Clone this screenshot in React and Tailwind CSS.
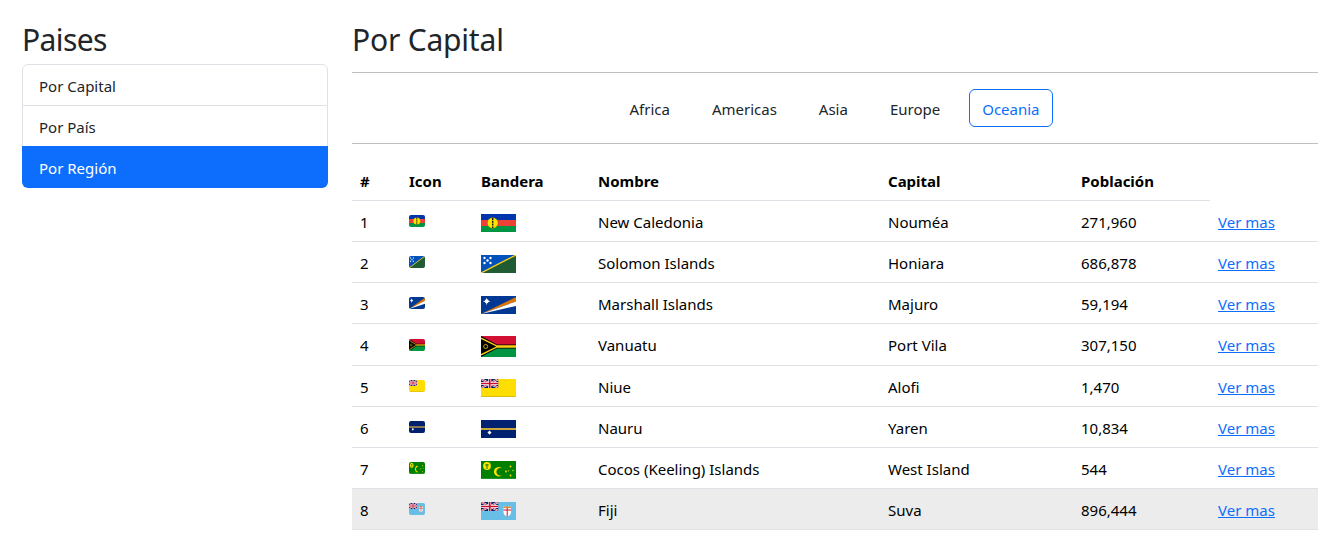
import { useState } from "react";

const UnionJack = ({ w, h }) => (
  <g>
    <rect width={w} height={h} fill="#012169" />
    <path d={`M0 0L${w} ${h}M${w} 0L0 ${h}`} stroke="#fff" strokeWidth="2" />
    <path d={`M0 0L${w} ${h}M${w} 0L0 ${h}`} stroke="#c8102e" strokeWidth="0.8" />
    <path d={`M${w / 2} 0V${h}M0 ${h / 2}H${w}`} stroke="#fff" strokeWidth="3" />
    <path d={`M${w / 2} 0V${h}M0 ${h / 2}H${w}`} stroke="#c8102e" strokeWidth="1.6" />
  </g>
);

const FLAGS = {
  nc: {
    h: 18,
    slice: true,
    art: (
      <g>
        <rect width="35" height="6" fill="#0035ad" />
        <rect y="6" width="35" height="6" fill="#ed4135" />
        <rect y="12" width="35" height="6" fill="#009543" />
        <circle cx="11.7" cy="9" r="5.4" fill="#fae600" stroke="#1a1a00" strokeWidth="0.2" />
        <path d="M11.7 4V14" stroke="#111" strokeWidth="1.4" strokeDasharray="2 0.8" />
      </g>
    ),
  },
  sb: {
    h: 18,
    art: (
      <g>
        <path d="M0 0H35L0 18Z" fill="#0051ba" />
        <path d="M35 0V18H0Z" fill="#215b33" />
        <path d="M0 18L35 0" stroke="#fcd116" strokeWidth="1.3" />
        <g fill="#fff">
          <circle cx="3.5" cy="3" r="1.2" />
          <circle cx="9.5" cy="3" r="1.2" />
          <circle cx="6.5" cy="5.5" r="1.2" />
          <circle cx="3.5" cy="8" r="1.2" />
          <circle cx="9.5" cy="8" r="1.2" />
        </g>
      </g>
    ),
  },
  mh: {
    h: 18,
    art: (
      <g>
        <rect width="35" height="18" fill="#003893" />
        <path d="M0 18L35 1V5.5Z" fill="#dd7500" />
        <path d="M0 18L35 5.5V10Z" fill="#fff" />
        <path d="M5.7 1.5L6.5 4.4L9.5 5.3L6.5 6.2L5.7 9.2L4.9 6.2L1.9 5.3L4.9 4.4Z" fill="#fff" />
        <circle cx="5.7" cy="5.3" r="2" fill="#fff" />
      </g>
    ),
  },
  vu: {
    h: 21,
    art: (
      <g>
        <rect width="35" height="10.5" fill="#d21034" />
        <rect y="10.5" width="35" height="10.5" fill="#009543" />
        <path d="M0 0L16 8.5H35V12.5H16L0 21Z" fill="#000" />
        <path d="M0 2.2L15.5 9.8H35V11.2H15.5L0 18.8" fill="none" stroke="#fdce12" strokeWidth="1.3" />
        <circle cx="4.7" cy="10.5" r="2" fill="none" stroke="#fdce12" strokeWidth="0.8" />
      </g>
    ),
  },
  nu: {
    h: 18,
    art: (
      <g>
        <rect width="35" height="18" fill="#fedd00" />
        <svg width="17.5" height="9" viewBox="0 0 17.5 9">
          <UnionJack w={17.5} h={9} />
        </svg>
        <rect y="17.3" width="35" height="0.7" fill="#c9b020" />
      </g>
    ),
  },
  nr: {
    h: 18,
    art: (
      <g>
        <rect width="35" height="18" fill="#002170" />
        <rect y="8" width="35" height="2" fill="#c9a53c" />
        <path d="M8.5 10.2L9.2 12L11 12.5L9.2 13L8.5 15L7.8 13L6 12.5L7.8 12Z" fill="#fff" />
        <circle cx="8.5" cy="12.5" r="1.5" fill="#fff" />
      </g>
    ),
  },
  cc: {
    h: 18,
    art: (
      <g>
        <rect width="35" height="18" fill="#008000" />
        <rect y="17.2" width="35" height="0.8" fill="#2e9a2e" />
        <circle cx="6" cy="5" r="3.9" fill="#ffe000" />
        <path d="M6 3V8M4.3 4H7.7" stroke="#0a7a00" strokeWidth="1" />
        <path d="M21 7.2A4.8 4.8 0 1 0 21 14.2A3.9 3.9 0 1 1 21 7.2Z" fill="#ffe000" />
        <g fill="#ffe000">
          <circle cx="25" cy="10.5" r="0.9" />
          <circle cx="29.5" cy="5.5" r="0.9" />
          <circle cx="29.5" cy="14.5" r="0.9" />
          <circle cx="32" cy="9.5" r="0.7" />
          <circle cx="27.5" cy="9.8" r="0.6" />
        </g>
      </g>
    ),
  },
  fj: {
    h: 18,
    art: (
      <g>
        <rect width="35" height="18" fill="#68bfe5" />
        <svg width="17.5" height="9" viewBox="0 0 17.5 9">
          <UnionJack w={17.5} h={9} />
        </svg>
        <path d="M22.5 4.5H30V10.5C30 13 27.5 14 26.2 14.5C25 14 22.5 13 22.5 10.5Z" fill="#fff" />
        <path d="M26.2 4.5V14.5M22.5 8H30" stroke="#ce1126" strokeWidth="1" />
        <rect x="22.5" y="4.5" width="7.5" height="1.6" fill="#d08a4a" />
      </g>
    ),
  },
};

function Flag({ code, className, icon }) {
  const flag = FLAGS[code];
  return (
    <svg
      viewBox={`0 0 35 ${flag.h}`}
      preserveAspectRatio={icon && flag.slice ? "xMinYMid slice" : "none"}
      className={className}
    >
      {flag.art}
    </svg>
  );
}

const countries = [
  { flag: "nc", name: "New Caledonia", capital: "Nouméa", population: "271,960" },
  { flag: "sb", name: "Solomon Islands", capital: "Honiara", population: "686,878" },
  { flag: "mh", name: "Marshall Islands", capital: "Majuro", population: "59,194" },
  { flag: "vu", name: "Vanuatu", capital: "Port Vila", population: "307,150" },
  { flag: "nu", name: "Niue", capital: "Alofi", population: "1,470" },
  { flag: "nr", name: "Nauru", capital: "Yaren", population: "10,834" },
  { flag: "cc", name: "Cocos (Keeling) Islands", capital: "West Island", population: "544" },
  { flag: "fj", name: "Fiji", capital: "Suva", population: "896,444" },
];

const regions = ["Africa", "Americas", "Asia", "Europe", "Oceania"];

export default function App() {
  const [region] = useState("Oceania");

  return (
    <div className="flex gap-6 pl-[22px] pr-[26px] pt-[20px] font-['Noto_Sans',sans-serif] text-[15px] text-[#212529] bg-white h-[537px] overflow-hidden">
      <aside className="w-[306px] shrink-0">
        <h2 className="text-[30px] tracking-[-0.6px] leading-[38px] pt-[1px] mb-[5px]">Paises</h2>
        <div className="flex flex-col">
          <a className="pl-[16px] pt-[2px] h-[42px] flex items-center border border-[#dee2e6] rounded-t-md">Por Capital</a>
          <a className="pl-[16px] pt-[2px] h-[40px] flex items-center border-x border-[#dee2e6]">Por País</a>
          <a className="pl-[17px] pt-[2px] h-[42px] flex items-center bg-[#0d6efd] text-white rounded-b-md">Por Región</a>
        </div>
      </aside>

      <main className="flex-1 min-w-0">
        <h2 className="text-[30px] tracking-[-0.2px] leading-[38px] pt-[1px]">Por Capital</h2>
        <hr className="mt-[13px] border-[#bfbfbf]" />
        <nav className="flex justify-center gap-4 my-4 pr-[1px]">
          {regions.map((r) => (
            <button
              key={r}
              type="button"
              className={
                r === region
                  ? "h-[38px] px-3 pt-[2px] border border-[#0d6efd] rounded-md text-[#0d6efd]"
                  : "h-[38px] px-3 pt-[2px] border border-transparent"
              }
            >
              {r}
            </button>
          ))}
        </nav>
        <hr className="border-[#bfbfbf]" />

        <table className="mt-[15px] w-full table-fixed border-collapse text-black">
          <colgroup>
            <col className="w-[49px]" />
            <col className="w-[72px]" />
            <col className="w-[117px]" />
            <col className="w-[290px]" />
            <col className="w-[193px]" />
            <col className="w-[137px]" />
            <col />
          </colgroup>
          <thead>
            <tr className="h-[41px] text-left">
              <th className="px-2 pt-[3px] font-bold border-b border-[#dee2e6]">#</th>
              <th className="px-2 pt-[3px] font-bold border-b border-[#dee2e6]">Icon</th>
              <th className="px-2 pt-[3px] font-bold border-b border-[#dee2e6]">Bandera</th>
              <th className="px-2 pt-[3px] font-bold border-b border-[#dee2e6]">Nombre</th>
              <th className="px-2 pt-[3px] font-bold border-b border-[#dee2e6]">Capital</th>
              <th className="px-2 pt-[3px] font-bold border-b border-[#dee2e6]">Población</th>
            </tr>
          </thead>
          <tbody>
            {countries.map((c, i) => (
              <tr
                key={c.name}
                className={
                  i === 7
                    ? "h-[41px] border-b border-[#dee2e6] bg-[#ececec]"
                    : i === 3
                      ? "h-[42px] border-b border-[#dee2e6]"
                      : "h-[41px] border-b border-[#dee2e6]"
                }
              >
                <td className="px-2 pt-[3px]">{i + 1}</td>
                <td className="px-2">
                  <Flag code={c.flag} icon className="w-4 h-3 mt-[1px] rounded-[2px]" />
                </td>
                <td className="px-2">
                  <Flag
                    code={c.flag}
                    className={c.flag === "vu" ? "w-[35px] h-[21px] mt-[4px]" : "w-[35px] h-[18px] mt-[5px]"}
                  />
                </td>
                <td className="px-2 pt-[3px]">{c.name}</td>
                <td className="px-2 pt-[3px]">{c.capital}</td>
                <td className="px-2 pt-[3px]">{c.population}</td>
                <td className="px-2 pt-[3px]">
                  <a className="text-[#0d6efd] underline">Ver mas</a>
                </td>
              </tr>
            ))}
          </tbody>
        </table>
      </main>
    </div>
  );
}
